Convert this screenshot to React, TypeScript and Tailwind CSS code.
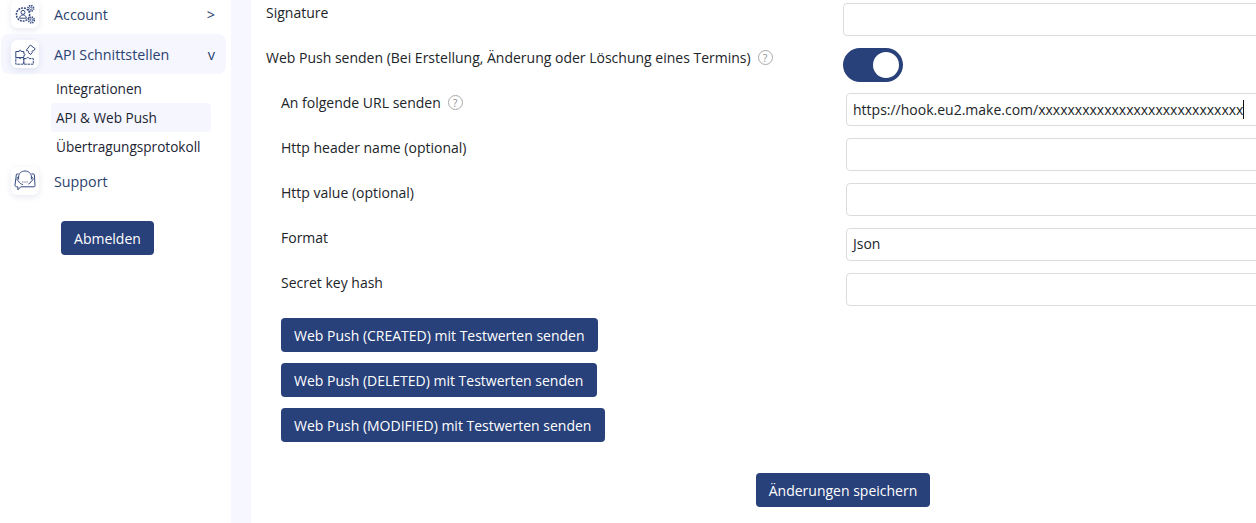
import { ReactNode } from "react";

const NAVY = "bg-[#28417a]";

function IconBox({ children }: { children: ReactNode }) {
  return (
    <div className="flex h-7 w-7 shrink-0 items-center justify-center rounded-md bg-white shadow-[0_2px_6px_rgba(60,70,140,0.12)]">
      {children}
    </div>
  );
}

function AccountIcon() {
  return (
    <svg width="21" height="21" viewBox="0 0 21 21" fill="none" stroke="#34497f" strokeWidth="1">
      <circle cx="15.8" cy="4.4" r="2.8" strokeWidth="1.7" strokeDasharray="1.3 0.9" />
      <circle cx="15.8" cy="4.4" r="1.2" strokeWidth="0.7" />
      <circle cx="16.4" cy="16" r="2.8" strokeWidth="1.7" strokeDasharray="1.3 0.9" />
      <circle cx="16.4" cy="16" r="1.2" strokeWidth="0.7" />
      <circle cx="8" cy="10.5" r="6.6" strokeWidth="1.5" strokeDasharray="1.9 1" />
      <circle cx="8" cy="8.4" r="2" />
      <path d="M4.6 14.2c.3-2.2 1.7-3.3 3.4-3.3s3.1 1.1 3.4 3.3z" />
    </svg>
  );
}

function PuzzleIcon() {
  return (
    <svg width="21" height="21" viewBox="0 0 21 21" fill="none" stroke="#34497f" strokeWidth="1">
      <path d="M.8 7.5h3.4c-.5-1.6 2.6-1.6 2 0h2.6v2.2c1.4-.5 1.4 2.3 0 1.9v2H.8z" />
      <path d="M.8 13.6h3.4c-.5 1.4 2.4 1.4 2 0h2.6v6.6H.8z" strokeDasharray="2.6 0.7" />
      <path d="M8.8 14.6h3c-.5-1.5 2.7-1.5 2.1 0h4.4v5.6H8.8z" strokeDasharray="2.6 0.7" />
      <path d="M11.6 5.8 15.4 1l4.8 3.8-1.8 2.2c-1-.7-2 .6-1.1 1.5l-1.6 2-2.4-1.9c.8-1.2-.6-2.6-1.6-1.7z" />
    </svg>
  );
}

function SupportIcon() {
  return (
    <svg width="22" height="22" viewBox="0 0 22 22" fill="none" stroke="#34497f" strokeWidth="1">
      <path d="M4.5 3.8 2.4 4.2 1 15.2c0 .9.6 1.6 1.5 1.6h1.4v3l2.8-3H20c.6 0 1-.4 1-1L20.4 5c0-.6-.5-1-1.1-1.1l-1.8-.1" />
      <path d="M4.6 9.5V7C4.6 3.4 7.4 1 11 1s6.4 2.4 6.4 6v2.5" />
      <path d="M4.6 6.8c-1 .2-1.6 1-1.6 2.1s.6 2 1.6 2.2c.7 1.9 2.4 3.2 4.4 3.4" />
      <path d="M17.4 6.8c1 .2 1.6 1 1.6 2.1s-.6 2-1.6 2.2c-.5 1.3-1.6 2.4-3 3" />
      <path d="M8.4 12h1M10.5 12h1M12.6 12h1" />
    </svg>
  );
}

function HelpIcon() {
  return (
    <span className="ml-[7px] inline-flex h-[15px] w-[15px] items-center justify-center rounded-full border border-[#a9a9a9] text-[10px] leading-none text-[#8a8a8a]">
      ?
    </span>
  );
}

function NavItem({ icon, label, mark, active }: { icon: ReactNode; label: string; mark?: string; active?: boolean }) {
  return (
    <div className={`flex h-10 items-center rounded-lg pl-[10px] pr-[11px] ${active ? "bg-[#f5f6fe]" : ""}`}>
      <IconBox>{icon}</IconBox>
      <span className="ml-[15px] flex-1 pt-[2px] text-[14.3px] text-[#2c4270]">{label}</span>
      {mark && <span className="pt-[2px] text-[14.5px] text-[#2c4270]">{mark}</span>}
    </div>
  );
}

function SubItem({ label, active }: { label: string; active?: boolean }) {
  return (
    <div className={`ml-[51px] flex h-[29px] w-[160px] items-center rounded pl-[5px] pt-[2px] text-[13.6px] text-[#1c2433] ${active ? "bg-[#f5f6fe]" : ""}`}>
      {label}
    </div>
  );
}

function SubRow({ label, value, help, focused }: { label: string; value?: string; help?: boolean; focused?: boolean }) {
  return (
    <div className="flex h-[45px] pl-[15px]">
      <div className="flex h-[19px] w-[565px] shrink-0 items-center text-[14px] text-[#212529]">
        {label}
        {help && <HelpIcon />}
      </div>
      <div className={`flex h-[33px] w-[420px] shrink-0 items-center rounded border border-[#dcdcdc] pl-[6px] text-[14px] text-[#212529] ${focused ? "" : "pb-[2px]"}`}>
        {value}
        {focused && <span className="h-[19px] w-px bg-[#111]" />}
      </div>
    </div>
  );
}

function TestButton({ label, width }: { label: string; width: string }) {
  return (
    <button className={`block h-[34px] rounded pl-[13px] text-left text-[14px] text-white ${width} ${NAVY}`}>{label}</button>
  );
}

export default function App() {
  return (
    <div className="flex h-[523px] w-[1256px] overflow-hidden bg-white font-['Open_Sans','Noto_Sans',sans-serif]">
      {/* sidebar */}
      <aside className="w-[231px] shrink-0">
        <div className="-mt-[6px] pl-px pr-[5px]">
          <NavItem icon={<AccountIcon />} label="Account" mark=">" />
        </div>
        <div className="pl-px pr-[5px]">
          <NavItem icon={<PuzzleIcon />} label="API Schnittstellen" mark="v" active />
        </div>
        <div>
          <SubItem label="Integrationen" />
          <SubItem label="API & Web Push" active />
          <SubItem label="Übertragungsprotokoll" />
        </div>
        <div className="pl-px pr-[5px]">
          <NavItem icon={<SupportIcon />} label="Support" />
        </div>
        <button className={`ml-[61px] mt-[20px] block h-[34px] w-[93px] rounded text-[14px] text-white ${NAVY}`}>
          Abmelden
        </button>
      </aside>
      <div className="w-5 shrink-0 bg-[#f6f7ff]" />

      {/* form */}
      <main className="min-w-0 flex-1 pl-[15px]">
        <div className="flex h-[48px] pt-[3px]">
          <div className="h-5 w-[577px] shrink-0 text-[14px] leading-5 text-[#212529]">Signature</div>
          <div className="h-[33px] w-[420px] shrink-0 rounded border border-[#dcdcdc]" />
        </div>
        <div className="flex h-[45px]">
          <div className="flex h-[19px] w-[577px] shrink-0 items-center text-[14px] text-[#212529]">
            Web Push senden (Bei Erstellung, Änderung oder Löschung eines Termins)
            <HelpIcon />
          </div>
          <div className={`flex h-[34px] w-[60px] shrink-0 items-center justify-end rounded-full pr-[4px] ${NAVY}`}>
            <div className="h-[26px] w-[26px] rounded-full bg-white" />
          </div>
        </div>
        <SubRow label="An folgende URL senden" help focused value="https://hook.eu2.make.com/xxxxxxxxxxxxxxxxxxxxxxxxxxxx" />
        <SubRow label="Http header name (optional)" />
        <SubRow label="Http value (optional)" />
        <SubRow label="Format" value="Json" />
        <SubRow label="Secret key hash" />
        <div className="flex flex-col items-start gap-[11px] pl-[15px]">
          <TestButton label="Web Push (CREATED) mit Testwerten senden" width="w-[317px]" />
          <TestButton label="Web Push (DELETED) mit Testwerten senden" width="w-[316px]" />
          <TestButton label="Web Push (MODIFIED) mit Testwerten senden" width="w-[324px]" />
        </div>
        <button className={`ml-[490px] mt-[31px] block h-[34px] w-[174px] rounded text-[14px] text-white ${NAVY}`}>
          Änderungen speichern
        </button>
      </main>
    </div>
  );
}
